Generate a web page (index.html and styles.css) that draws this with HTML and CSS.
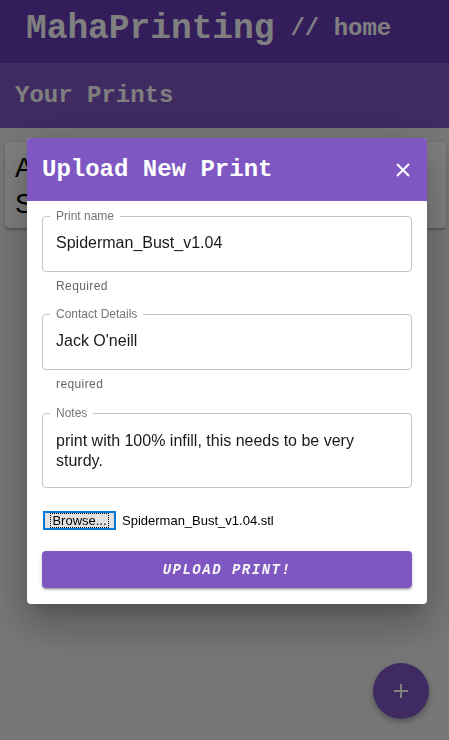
FILE: index.html
```html
<!DOCTYPE html>
<html>
<head>
<meta charset="utf-8">
<link rel="stylesheet" href="styles.css">
</head>
<body>
<header class="topbar">
  <span class="brand">MahaPrinting</span>
  <span class="crumb">// home</span>
</header>
<div class="subbar">Your Prints</div>
<main class="content">
  <div class="card">
    <div class="card-line">Awaiting your first print</div>
    <div class="card-line">Start by uploading one</div>
  </div>
</main>
<button class="fab" aria-label="add">
  <svg width="16" height="16" viewBox="0 0 16 16"><path d="M8 1v14M1 8h14" stroke="#fff" stroke-width="2" fill="none"/></svg>
</button>

<div class="overlay">
  <div class="modal">
    <div class="modal-head">
      <span class="modal-title">Upload New Print</span>
      <svg class="close" width="14" height="14" viewBox="0 0 14 14"><path d="M1 1L13 13M13 1L1 13" stroke="#fff" stroke-width="2" fill="none"/></svg>
    </div>
    <div class="modal-body">
      <fieldset class="field">
        <legend>Print name</legend>
        <input class="field-input" type="text" value="Spiderman_Bust_v1.04">
      </fieldset>
      <div class="helper">Required</div>
      <fieldset class="field">
        <legend>Contact Details</legend>
        <input class="field-input" type="text" value="Jack O'neill">
      </fieldset>
      <div class="helper">required</div>
      <fieldset class="field notes">
        <legend>Notes</legend>
        <div class="field-text">print with 100% infill, this needs to be very sturdy.</div>
      </fieldset>
      <div class="file-row">
        <span class="browse"><span class="browse-inner">Browse...</span></span>
        <span class="file-name">Spiderman_Bust_v1.04.stl</span>
      </div>
      <button class="upload">UPLOAD PRINT!</button>
    </div>
  </div>
</div>
</body>
</html>
```

FILE: styles.css
```css
html, body {
  margin: 0;
  padding: 0;
}
body {
  width: 449px;
  height: 740px;
  overflow: hidden;
  background: #eeeeee;
  font-family: "Liberation Sans", Arial, sans-serif;
}
.topbar {
  height: 63px;
  background: #673ab7;
  color: #fff;
  display: flex;
  align-items: center;
  padding: 0 0 6px 26px;
  box-sizing: border-box;
  font-family: "Liberation Mono", "Courier New", monospace;
  font-weight: bold;
}
.brand {
  font-size: 34.5px;
  line-height: 40px;
}
.crumb {
  font-size: 24px;
  margin-left: 16px;
}
.subbar {
  height: 65px;
  background: #7e57c2;
  color: #fff;
  font-family: "Liberation Mono", "Courier New", monospace;
  font-weight: bold;
  font-size: 24px;
  line-height: 65px;
  padding-left: 15px;
}
.content {
  padding: 14px 3px 0 5px;
}
.card {
  background: #fff;
  border-radius: 4px;
  box-shadow: 0 2px 2px rgba(0,0,0,0.25), 0 0 2px rgba(0,0,0,0.15);
  padding: 8px 10px 6px;
  height: 72px;
}
.card-line {
  font-size: 27px;
  line-height: 36px;
  color: #000;
  white-space: nowrap;
}
.fab {
  position: fixed;
  right: 20px;
  bottom: 21px;
  width: 56px;
  height: 56px;
  border-radius: 50%;
  border: none;
  background: #7e57c2;
  box-shadow: 0 3px 6px rgba(0,0,0,0.3);
  display: flex;
  align-items: center;
  justify-content: center;
  padding: 0;
}
.overlay {
  position: fixed;
  inset: 0;
  background: rgba(0,0,0,0.5);
  display: flex;
  justify-content: flex-start;
  align-items: flex-start;
  padding: 138px 0 0 27px;
}
.modal {
  width: 400px;
  background: #fff;
  border-radius: 4px;
  box-shadow: 0 11px 15px -7px rgba(0,0,0,0.2), 0 24px 38px 3px rgba(0,0,0,0.14), 0 9px 46px 8px rgba(0,0,0,0.12);
  overflow: hidden;
}
.modal-head {
  height: 63px;
  background: #7e57c2;
  display: flex;
  align-items: center;
  justify-content: space-between;
  padding: 0 17px 0 15px;
}
.modal-title {
  font-family: "Liberation Mono", "Courier New", monospace;
  font-weight: bold;
  font-size: 24px;
  color: #fff;
}
.modal-body {
  padding: 8px 15px 16px;
}
.field {
  margin: 0;
  border: 1px solid #c4c4c4;
  border-radius: 4px;
  padding: 0 13px;
  height: 63px;
  box-sizing: border-box;
}
.field legend {
  font-size: 12px;
  color: #757575;
  padding: 0 6px;
  margin-left: -6px;
  line-height: 14px;
}
.field-input {
  border: none;
  outline: none;
  padding: 0;
  margin: 0;
  width: 100%;
  font-family: "Liberation Sans", Arial, sans-serif;
  font-size: 16px;
  color: #1a1a1a;
  height: 40px;
  background: transparent;
}
.notes {
  height: 82px;
  margin-top: 1px;
}
.field-text {
  font-size: 16px;
  line-height: 20px;
  color: #1a1a1a;
  padding-top: 11px;
}
.helper {
  font-size: 12px;
  color: #666;
  letter-spacing: 0.4px;
  padding: 7px 0 0 14px;
  height: 28px;
}
.file-row {
  margin-top: 22px;
  display: flex;
  align-items: center;
  height: 20px;
}
.browse {
  box-sizing: border-box;
  width: 73px;
  height: 19px;
  border: 2px solid #0078d7;
  background: #e1e1e1;
  display: flex;
  align-items: center;
  justify-content: center;
  margin-left: 1px;
}
.browse-inner {
  font-size: 13px;
  line-height: 13px;
  color: #000;
  outline: 1px dotted #000;
  outline-offset: 0;
  padding: 0 1px;
}
.file-name {
  font-size: 13px;
  color: #000;
  margin-left: 6px;
}
.upload {
  display: block;
  margin-top: 21px;
  width: 100%;
  height: 37px;
  border: none;
  border-radius: 4px;
  background: #7e57c2;
  color: #f5f5f5;
  box-shadow: 0 3px 1px -2px rgba(0,0,0,0.2), 0 2px 2px rgba(0,0,0,0.14), 0 1px 5px rgba(0,0,0,0.12);
  font-family: "Liberation Mono", "Courier New", monospace;
  font-style: italic;
  font-weight: bold;
  font-size: 14px;
  letter-spacing: 1.5px;
}
```
